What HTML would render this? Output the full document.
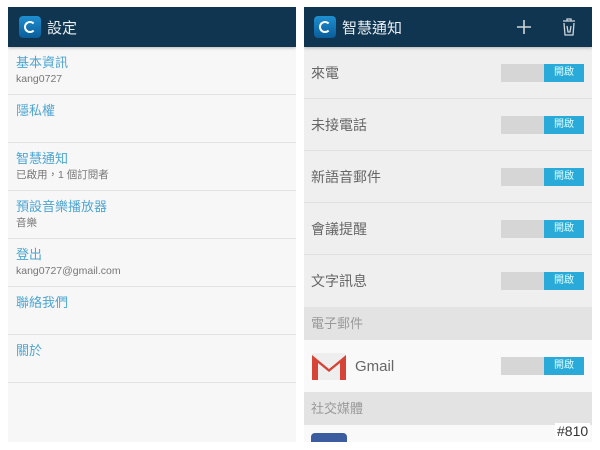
<!DOCTYPE html>
<html><head><meta charset="utf-8"><style>
*{margin:0;padding:0;box-sizing:border-box}
html,body{width:600px;height:450px;overflow:hidden}
body{background:#fff;position:relative;font-family:"Liberation Sans","Noto Sans CJK TC",sans-serif}
.p{position:absolute;top:7px;height:435px;overflow:hidden}
.l{left:8px;width:288px;background:#f7f7f7}
.r{left:304px;width:288px;background:#efefef}
.hd{height:40px;background:#0f3550;color:#e8eef2;font-size:15px;display:flex;align-items:center;position:relative;box-shadow:0 1px 3px rgba(0,0,0,.25);z-index:2}
.logo{width:22px;height:22px;border-radius:4px;background:linear-gradient(#1e8fd0,#0a5d9a);margin:0 6px 0 11px;position:relative}
.logo:after{content:"";position:absolute;left:5px;top:5px;width:8px;height:8px;border:2.5px solid #fff;border-right-color:transparent;border-radius:50%}
.it{height:48px;border-bottom:1.5px solid #e2e2e2;padding:8px 8px 0}
.t{color:#4ea6d3;font-size:13px;line-height:16px}
.s{color:#777;font-size:10.5px;line-height:16px}
.row{height:52px;border-bottom:1px solid #e0e0e0;display:flex;align-items:center;padding-left:7px;color:#666;font-size:14px;position:relative}
.tg{position:absolute;left:197px;top:50%;margin-top:-9px;width:83px;height:18px;background:#d6d6d6}
.tg b{position:absolute;right:0;top:0;width:40px;height:18px;background:#2aaad9;color:#dff;font-weight:normal;font-size:10px;text-align:center;line-height:18px}
.sec{height:33px;background:#e3e3e3;color:#999;font-size:13px;line-height:33px;padding-left:7px}
</style></head><body>
<div class="p l">
<div class="hd"><div class="logo"></div>設定</div>
<div class="it"><div class="t">基本資訊</div><div class="s">kang0727</div></div>
<div class="it"><div class="t">隱私權</div></div>
<div class="it"><div class="t">智慧通知</div><div class="s">已啟用，1 個訂閱者</div></div>
<div class="it"><div class="t">預設音樂播放器</div><div class="s">音樂</div></div>
<div class="it"><div class="t">登出</div><div class="s">kang0727@gmail.com</div></div>
<div class="it"><div class="t">聯絡我們</div></div>
<div class="it"><div class="t">關於</div></div>
</div>
<div class="p r">
<div class="hd"><div class="logo" style="margin-left:10px"></div>智慧通知
<svg style="position:absolute;left:212px;top:12px" width="16" height="16"><path d="M8 1v14M1 8h14" stroke="#cfd6dc" stroke-width="1.6"/></svg>
<svg style="position:absolute;left:258px;top:11px" width="14" height="18"><path d="M1 3h12M5 3V1h4v2M2 5l1 12h8l1-12M5 8l1 6h2l1-6" stroke="#cfd6dc" stroke-width="1.3" fill="none"/></svg>
</div>
<div class="row">來電<div class="tg"><b>開啟</b></div></div>
<div class="row">未接電話<div class="tg"><b>開啟</b></div></div>
<div class="row">新語音郵件<div class="tg"><b>開啟</b></div></div>
<div class="row">會議提醒<div class="tg"><b>開啟</b></div></div>
<div class="row" style="border:0">文字訊息<div class="tg"><b>開啟</b></div></div>
<div class="sec">電子郵件</div>
<div class="row" style="background:#f9f9f9;border:0;font-size:15px;color:#666">
<svg width="36" height="30" style="margin:0 8px 0 0"><rect x="1" y="2" width="34" height="27" rx="2" fill="#eee"/><path d="M1 4l17 14 17-14v25h-6V12L18 21 7 12v17H1z" fill="#d54436"/></svg>Gmail<div class="tg"><b>開啟</b></div></div>
<div class="sec">社交媒體</div>
<div class="row" style="background:#f9f9f9"><div style="position:absolute;left:7px;top:8px;width:36px;height:30px;border-radius:4px;background:#3b5c9e"></div><div class="tg" style="top:26px"><b></b></div></div>
</div>
<div style="position:absolute;left:555px;top:423px;font-size:14px;color:#333;background:#fff;padding:0 2px">#810</div>
</body></html>
